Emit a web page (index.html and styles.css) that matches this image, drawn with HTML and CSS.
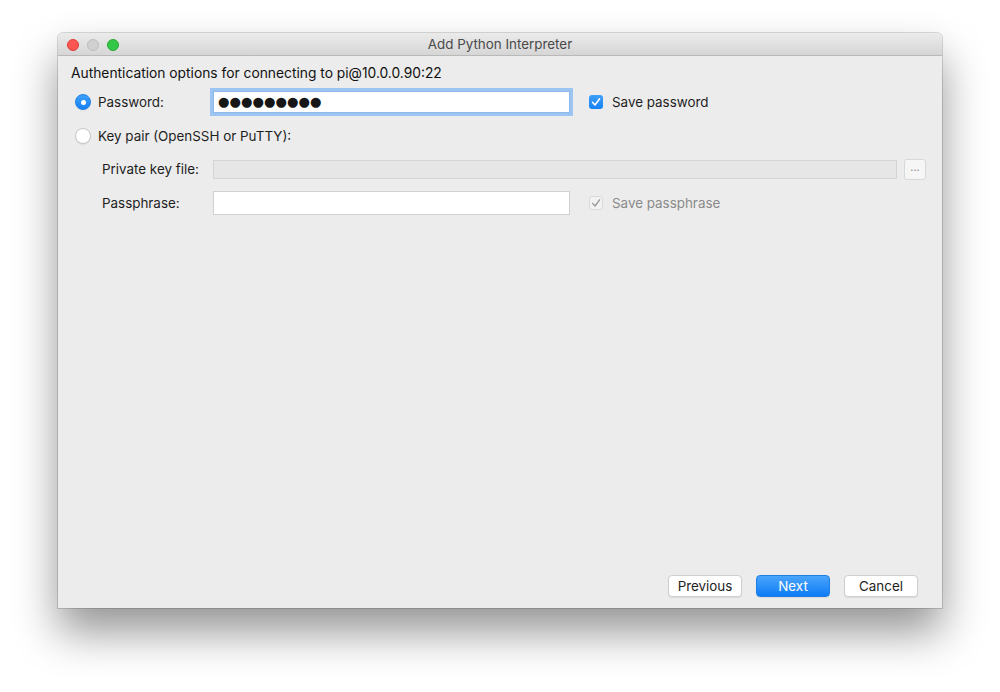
FILE: index.html
```html
<!DOCTYPE html>
<html lang="en">
<head>
  <meta charset="UTF-8" />
  <title>Add Python Interpreter</title>
  <link rel="stylesheet" href="styles.css">
</head>
<body>
  <div class="stage">
    <div class="window">
      <div class="titlebar">
        <div class="lights">
          <span class="light red"></span>
          <span class="light gray"></span>
          <span class="light green"></span>
        </div>
        <div class="title">Add Python Interpreter</div>
      </div>

      <div class="content">
        <p class="heading">Authentication options for connecting to pi@10.0.0.90:22</p>

        <div class="row">
          <div class="label-col">
            <span class="radio checked"></span>
            <span>Password:</span>
          </div>
          <div class="field focused"><span class="dots">●●●●●●●●●</span></div>
          <div class="check-wrap">
            <span class="checkbox checked">
              <svg viewBox="0 0 14 14" width="14" height="14"><path d="M3.6 7.4 L6 10 L10.6 3.8" fill="none" stroke="#fff" stroke-width="1.6" stroke-linecap="round" stroke-linejoin="round"/></svg>
            </span>
            <span>Save password</span>
          </div>
        </div>

        <div class="row">
          <div class="label-col">
            <span class="radio"></span>
            <span>Key pair (OpenSSH or PuTTY):</span>
          </div>
        </div>

        <div class="row sub">
          <div class="label-col indent">Private key file:</div>
          <div class="field disabled wide"></div>
          <button class="browse">...</button>
        </div>

        <div class="row sub">
          <div class="label-col indent">Passphrase:</div>
          <div class="field"></div>
          <div class="check-wrap muted">
            <span class="checkbox off">
              <svg viewBox="0 0 14 14" width="14" height="14"><path d="M3.6 7.4 L6 10 L10.6 3.8" fill="none" stroke="#9a9a9a" stroke-width="1.4" stroke-linecap="round" stroke-linejoin="round"/></svg>
            </span>
            <span>Save passphrase</span>
          </div>
        </div>

        <div class="actions">
          <button class="btn">Previous</button>
          <button class="btn primary">Next</button>
          <button class="btn">Cancel</button>
        </div>
      </div>
    </div>
  </div>
</body>
</html>
```

FILE: styles.css
```css
html, body {
  margin: 0;
  padding: 0;
  background: #ffffff;
}
body {
  font-family: Inter, "Liberation Sans", Arial, sans-serif;
  font-size: 13.4px;
  color: #1e1e1e;
  width: 1000px;
  height: 692px;
  overflow: hidden;
}
.stage {
  padding: 33px 58px 0;
}
.window {
  width: 884px;
  height: 575px;
  display: flex;
  flex-direction: column;
  background: #ececec;
  border-radius: 5px 5px 0 0;
  box-shadow: 0 24px 44px rgba(0, 0, 0, 0.42), 0 0 0 1px rgba(0, 0, 0, 0.14);
}
.titlebar {
  height: 22px;
  position: relative;
  display: flex;
  align-items: center;
  justify-content: center;
  background: linear-gradient(to bottom, #ebebeb, #d6d6d6);
  border-bottom: 1px solid #b9b9b9;
  border-radius: 5px 5px 0 0;
}
.lights {
  position: absolute;
  left: 9px;
  top: 6px;
  display: flex;
  gap: 8px;
}
.light {
  width: 12px;
  height: 12px;
  border-radius: 50%;
  box-sizing: border-box;
}
.red { background: #fc5753; border: 1px solid #df3d39; }
.gray { background: #d0d0d0; border: 1px solid #bdbdbd; }
.green { background: #33c748; border: 1px solid #27aa35; }
.title {
  color: #4a4a4a;
}
.content {
  flex: 1;
  display: flex;
  flex-direction: column;
  padding: 9px 16px 11px 13px;
}
.heading {
  margin: 0 0 8px;
  line-height: 16px;
  font-size: 13.8px;
  color: #111;
}
.row {
  display: flex;
  align-items: center;
  height: 26px;
  margin-bottom: 8px;
  padding-left: 4px;
}
.row.sub {
  height: 24px;
  margin-bottom: 10px;
}
.label-col {
  width: 138px;
  display: flex;
  align-items: center;
  gap: 7px;
  flex-shrink: 0;
  white-space: nowrap;
}
.label-col.indent {
  padding-left: 27px;
  box-sizing: border-box;
}
.radio {
  width: 16px;
  height: 16px;
  border-radius: 50%;
  box-sizing: border-box;
  background: #fff;
  border: 1px solid #c6c6c6;
  box-shadow: 0 1px 1px rgba(0, 0, 0, 0.06);
  position: relative;
  flex-shrink: 0;
}
.radio.checked {
  background: linear-gradient(to bottom, #3fa0fb, #1681f5);
  border-color: #1a7fe8;
}
.radio.checked::after {
  content: "";
  position: absolute;
  left: 4.5px;
  top: 4.5px;
  width: 5px;
  height: 5px;
  border-radius: 50%;
  background: #fff;
}
.field {
  width: 357px;
  height: 24px;
  box-sizing: border-box;
  background: #fff;
  border: 1px solid #d0d0d0;
  flex-shrink: 0;
  display: flex;
  align-items: center;
  padding-left: 4px;
  color: #111;
}
.dots {
  font-family: "DejaVu Sans", sans-serif;
  font-size: 13.2px;
  line-height: 1;
  color: #161616;
}
.field.focused {
  height: 22px;
  border-color: #8fb9ea;
  box-shadow: 0 0 0 3px #9cc5f3;
}
.field.disabled {
  background: #e6e6e6;
  border-color: #d4d4d4;
  height: 19px;
}
.field.wide {
  width: 684px;
}
.browse {
  margin-left: 7px;
  width: 22px;
  height: 21px;
  padding: 0 0 3px;
  border: 1px solid #d8d8d8;
  border-radius: 3px;
  background: #f6f6f6;
  color: #8c8c8c;
  font-family: inherit;
  font-size: 11px;
  line-height: 1;
  flex-shrink: 0;
}
.check-wrap {
  display: flex;
  align-items: center;
  gap: 9px;
  margin-left: 19px;
}
.check-wrap.muted {
  color: #8a8a8a;
}
.checkbox {
  width: 14px;
  height: 14px;
  border-radius: 3px;
  box-sizing: border-box;
  display: flex;
}
.checkbox.checked {
  background: linear-gradient(to bottom, #3fa0fb, #1681f5);
}
.checkbox.off {
  background: #f2f2f2;
  border: 1px solid #dadada;
}
.checkbox.off svg {
  margin: -1px;
}
.actions {
  margin-top: auto;
  display: flex;
  justify-content: flex-end;
  gap: 14px;
  padding-right: 8px;
}
.btn {
  width: 74px;
  height: 22px;
  border-radius: 4px;
  border: 1px solid #cfcfcf;
  background: #fff;
  font-family: inherit;
  font-size: 13.4px;
  color: #1e1e1e;
  box-shadow: 0 1px 1px rgba(0, 0, 0, 0.08);
  padding: 0;
}
.btn.primary {
  background: linear-gradient(to bottom, #4aa5fc, #0e7cf6);
  border-color: #1d7fe6;
  color: #fff;
}
```
